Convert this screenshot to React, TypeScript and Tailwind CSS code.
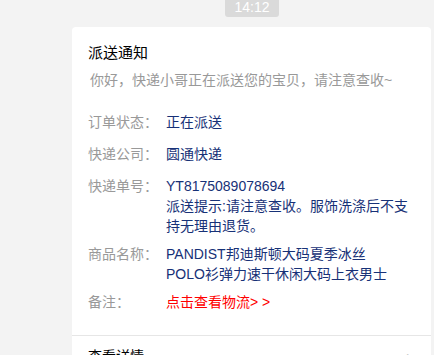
const rows = [
  { label: "订单状态：", lines: ["正在派送"], gap: "mb-[12px]" },
  { label: "快递公司：", lines: ["圆通快递"], gap: "mb-[12px]" },
  {
    label: "快递单号：",
    lines: ["YT8175089078694", "派送提示:请注意查收。服饰洗涤后不支", "持无理由退货。"],
    gap: "mb-[8px]",
  },
  {
    label: "商品名称：",
    lines: ["PANDIST邦迪斯顿大码夏季冰丝", "POLO衫弹力速干休闲大码上衣男士"],
    gap: "mb-[8px]",
  },
];

const App = () => {
  return (
    <div
      className="w-[434px] h-[355px] overflow-hidden bg-[#f3f3f3] flex flex-col"
      style={{ fontFamily: '"Liberation Sans", "Noto Sans CJK SC", sans-serif' }}
    >
      {/* time badge */}
      <div className="flex justify-center h-[27px] -mt-[3px] pl-[70px] shrink-0">
        <div className="h-[20px] px-[9px] rounded-[3px] bg-[#dadada] text-white text-[14px] leading-[20px]">
          14:12
        </div>
      </div>

      {/* card */}
      <div className="mt-[3px] ml-[72px] mr-[3px] bg-white rounded-t-[4px] flex-1">
        <div className="pl-[16px] pr-[10px] pt-[16px]">
          <div className="text-[15px] leading-[20px] text-black">派送通知</div>
          <div className="mt-[7px] pl-[2px] text-[14px] leading-[20px] text-[#999]">
            你好，快递小哥正在派送您的宝贝，请注意查收~
          </div>

          <div className="mt-[22px] flex flex-col text-[14px] leading-[20px]">
            {rows.map((row) => (
              <div key={row.label} className={`flex ${row.gap}`}>
                <div className="w-[78px] shrink-0 text-[#999]">{row.label}</div>
                <div className="text-[#173177]">
                  {row.lines.map((line) => (
                    <div key={line} className="whitespace-nowrap">
                      {line}
                    </div>
                  ))}
                </div>
              </div>
            ))}
            <div className="flex">
              <div className="w-[78px] shrink-0 text-[#999]">备注：</div>
              <div className="text-[#ff0000]">点击查看物流&gt; &gt;</div>
            </div>
          </div>
        </div>

        <div className="mt-[23px] border-t border-[#e6e6e6] pl-[16px] pr-[20px] pt-[10px] flex justify-between text-[14px] leading-[20px]">
          <span className="text-black">查看详情</span>
          <span className="text-[#bbb]">›</span>
        </div>
      </div>
    </div>
  );
};

export default App;
